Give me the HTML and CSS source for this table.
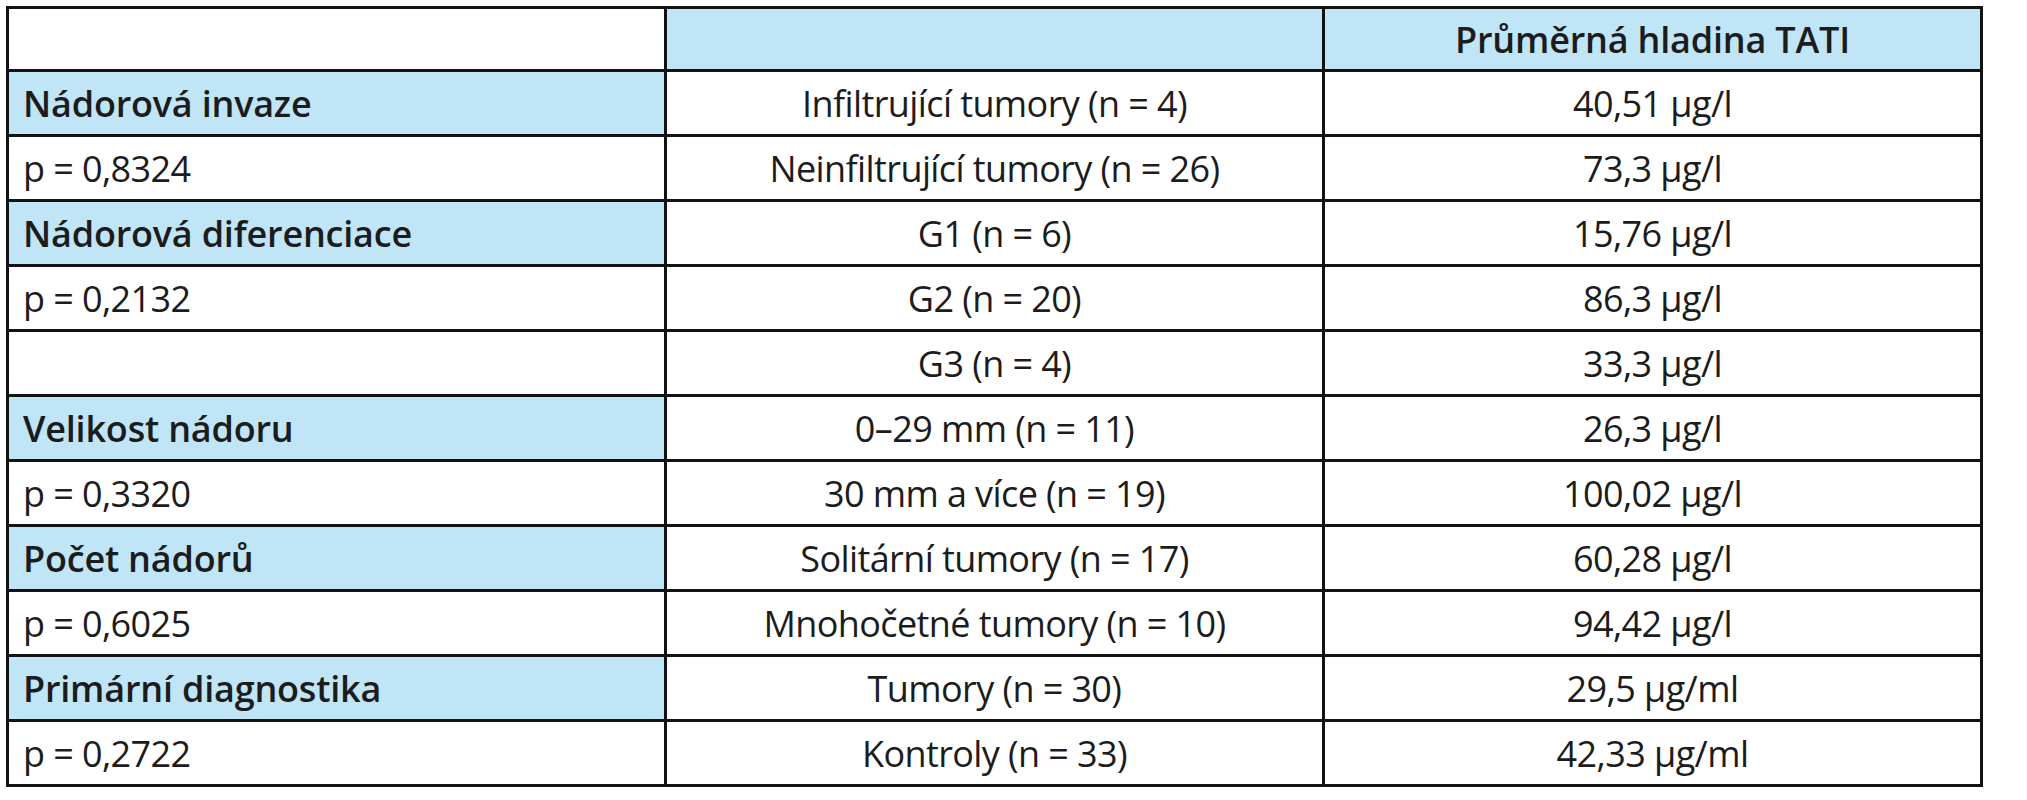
FILE: index.html
```html
<!DOCTYPE html>
<html lang="cs">
<head>
<meta charset="utf-8">
<title>TATI</title>
<link rel="stylesheet" href="styles.css">
</head>
<body>
<table class="data">
  <colgroup><col class="c"><col class="c"><col class="c"></colgroup>
  <tr class="head"><td></td><td class="blue"></td><td class="blue b">Průměrná hladina TATI</td></tr>
  <tr><td class="blue b left">Nádorová invaze</td><td>Infiltrující tumory (n = 4)</td><td>40,51 µg/l</td></tr>
  <tr><td class="left">p = 0,8324</td><td>Neinfiltrující tumory (n = 26)</td><td>73,3 µg/l</td></tr>
  <tr><td class="blue b left">Nádorová diferenciace</td><td>G1 (n = 6)</td><td>15,76 µg/l</td></tr>
  <tr><td class="left">p = 0,2132</td><td>G2 (n = 20)</td><td>86,3 µg/l</td></tr>
  <tr><td class="left"></td><td>G3 (n = 4)</td><td>33,3 µg/l</td></tr>
  <tr><td class="blue b left">Velikost nádoru</td><td>0–29 mm (n = 11)</td><td>26,3 µg/l</td></tr>
  <tr><td class="left">p = 0,3320</td><td>30 mm a více (n = 19)</td><td>100,02 µg/l</td></tr>
  <tr><td class="blue b left">Počet nádorů</td><td>Solitární tumory (n = 17)</td><td>60,28 µg/l</td></tr>
  <tr><td class="left">p = 0,6025</td><td>Mnohočetné tumory (n = 10)</td><td>94,42 µg/l</td></tr>
  <tr><td class="blue b left">Primární diagnostika</td><td>Tumory (n = 30)</td><td>29,5 µg/ml</td></tr>
  <tr><td class="left">p = 0,2722</td><td>Kontroly (n = 33)</td><td>42,33 µg/ml</td></tr>
</table>
</body>
</html>
```
FILE: styles.css
```css
html, body { margin: 0; padding: 0; background: #fff; }
body { padding: 6px 0 0 6px; }
.data {
  border-collapse: collapse;
  width: 1977px;
  table-layout: fixed;
  font-family: "Open Sans", "Liberation Sans", sans-serif;
  font-size: 36px;
  letter-spacing: -0.6px;
  color: #1c1c1c;
}
.data td {
  border: 3px solid #121212;
  height: 62px;
  padding: 0 14px;
  text-align: center;
  vertical-align: middle;
  white-space: nowrap;
}
.data tr.head td { height: 60px; }
.data td.left { text-align: left; }
.data td.blue { background: #bfe5f7; }
.data td.b { font-weight: 650; letter-spacing: -0.2px; }
```
